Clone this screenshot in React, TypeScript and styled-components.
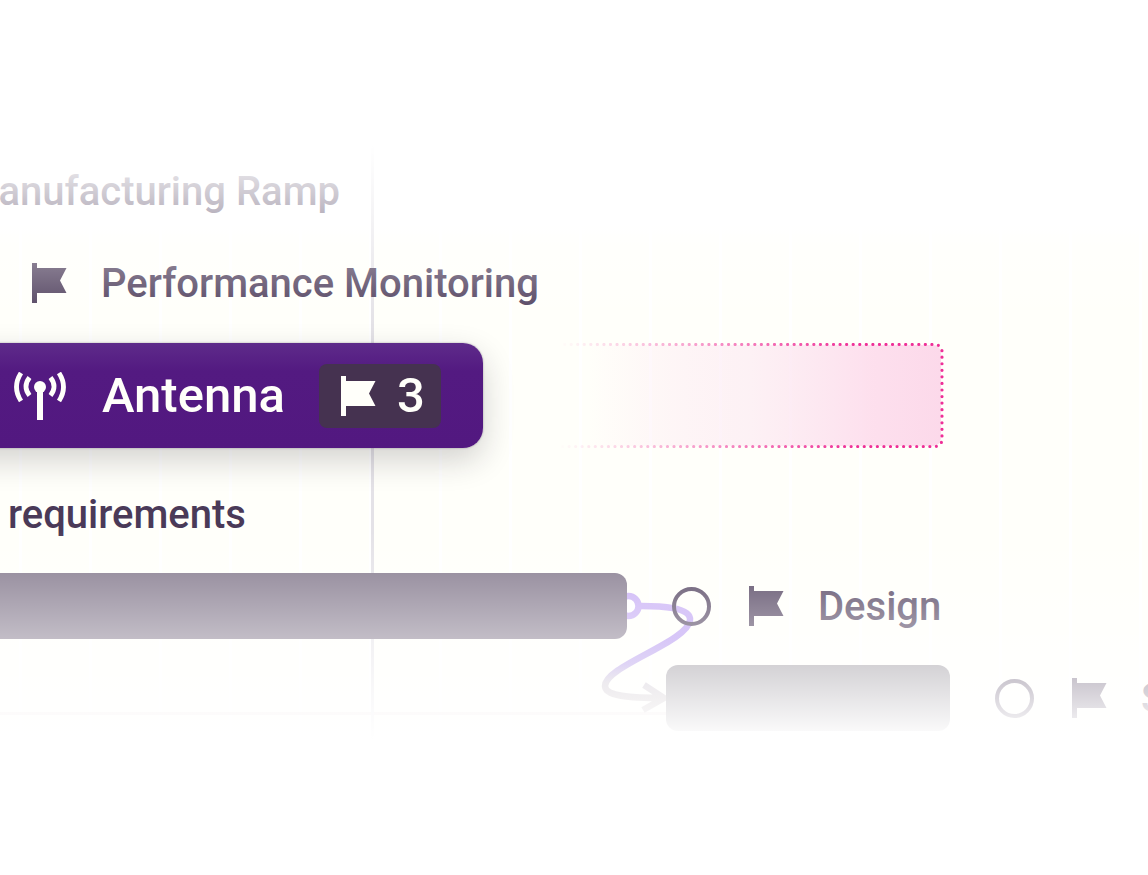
import React from "react";
import styled, { createGlobalStyle } from "styled-components";

const GlobalStyle = createGlobalStyle`
  * { box-sizing: border-box; }
  body {
    margin: 0;
    background: #fff;
    font-family: Roboto, "Liberation Sans", sans-serif;
  }
`;

const ink = "#4a3a58";

const Page = styled.main`
  min-height: 100vh;
  padding: 145px 0 131px;
  overflow: hidden;
`;

const Timeline = styled.section`
  position: relative;
  overflow: hidden;
  color: ${ink};
  background:
    linear-gradient(#e4e2e7, #e4e2e7) 371px 0 / 3px 100% no-repeat,
    linear-gradient(#ece2df, #ece2df) 0 567px / 666px 3px no-repeat,
    linear-gradient(90deg, #fff 3px, transparent 3px) 19px 0 / 70px 100%,
    linear-gradient(#fff 80px, #fffffa 100px);
`;

/* White mist that dissolves the first and last rows of the plan. */
const Mist = styled.div`
  position: absolute;
  inset: 0;
  pointer-events: none;
  background: linear-gradient(
    #fff 0,
    rgba(255, 255, 255, 0) 180px,
    rgba(255, 255, 255, 0) 385px,
    #fff 595px
  );
`;

const Row = styled.div<{ $start?: number }>`
  position: relative;
  display: flex;
  align-items: center;
  height: 92px;
  padding-left: ${({ $start = 0 }) => $start}px;
`;

const FocusRow = styled(Row)`
  align-items: flex-start;
  height: 139px;
  padding-top: 14px;
`;

const Label = styled.span`
  flex: none;
  padding-top: 2px;
  font-size: 40px;
  line-height: 48px;
  font-weight: 500;
  white-space: nowrap;
`;

const EndLabelBox = styled.div`
  display: flex;
  justify-content: flex-end;
  width: 340px;
`;

const Milestone = styled.div`
  display: flex;
  align-items: center;
  gap: 33px;
  flex: none;
`;

const Bar = styled.div<{ $width: number; $tone?: string }>`
  position: relative;
  flex: none;
  width: ${({ $width }) => $width}px;
  height: 66px;
  margin-right: 45px;
  border-radius: 12px;
  background: ${({ $tone = "#81768a" }) => $tone};
`;

const OpenBar = styled(Bar)`
  border-radius: 0 12px 12px 0;
`;

const Ring = styled.span`
  position: relative;
  flex: none;
  width: 39px;
  height: 39px;
  margin-right: 38px;
  border: 4px solid ${ink};
  border-radius: 50%;
`;

const Card = styled.article`
  position: relative;
  z-index: 2;
  display: flex;
  align-items: center;
  flex: none;
  width: 543px;
  height: 105px;
  margin-left: -60px;
  padding-left: 74px;
  border-radius: 20px;
  color: #fffffa;
  background: linear-gradient(#5e2b8a, #531a81 28px, #521880);
  box-shadow:
    0 0 2px rgba(40, 30, 50, 0.4),
    0 12px 32px rgba(30, 25, 35, 0.2);
`;

const CardTitle = styled.h2`
  margin: 0 34px 0 36px;
  font-size: 49px;
  line-height: 60px;
  font-weight: 500;
`;

const Badge = styled.span`
  display: flex;
  align-items: center;
  gap: 20px;
  width: 122px;
  height: 64px;
  padding-left: 22px;
  border-radius: 8px;
  background: #453250;
  font-size: 49px;
  line-height: 60px;
  font-weight: 500;
`;

const Ghost = styled.div`
  flex: none;
  width: 386px;
  height: 105px;
  margin-left: 75px;
`;

const Link = styled.svg`
  position: absolute;
  top: 0;
  left: 590px;
`;

function Flag() {
  return (
    <svg width="36" height="40" viewBox="0 0 36 40" fill="currentColor" aria-hidden="true">
      <path d="M0 0H5V5H34.5L28 17.5L34.5 30H5V40H0Z" />
    </svg>
  );
}

function AntennaIcon() {
  return (
    <svg width="52" height="48" viewBox="0 0 52 48" fill="none" stroke="currentColor" strokeWidth="4.8" aria-hidden="true">
      <circle cx="26" cy="15" r="6" fill="currentColor" stroke="none" />
      <path d="M26 15V48" strokeWidth="6" />
      <path d="M15.5 5.500Q8.5 14.500 15.5 23.500M36.5 5.500Q43.5 14.500 36.5 23.500" />
      <path d="M7 1Q-2 15 7 29M45 1Q54 15 45 29" />
    </svg>
  );
}

function GhostOutline() {
  return (
    <svg width="386" height="105" viewBox="0 0 386 105" fill="none" aria-hidden="true">
      <defs>
        <linearGradient id="ghostFill" gradientUnits="userSpaceOnUse" x1="30" y1="0" x2="384" y2="0">
          <stop offset="0" stopColor="#fcd5e8" stopOpacity="0" />
          <stop offset="0.45" stopColor="#fbe4f0" stopOpacity="0.5" />
          <stop offset="0.8" stopColor="#fddcec" stopOpacity="0.9" />
          <stop offset="1" stopColor="#fcd9ea" />
        </linearGradient>
        <linearGradient id="ghostDots" gradientUnits="userSpaceOnUse" x1="0" y1="0" x2="300" y2="0">
          <stop offset="0" stopColor="#ee2f97" stopOpacity="0" />
          <stop offset="1" stopColor="#ee2f97" />
        </linearGradient>
      </defs>
      <path d="M0 2H375a8 8 0 0 1 8 8V95a8 8 0 0 1-8 8H0Z" fill="url(#ghostFill)" />
      <path
        d="M0 1.5H377a7 7 0 0 1 7 7V96.500a7 7 0 0 1-7 7H0"
        stroke="url(#ghostDots)"
        strokeWidth="3.2"
        strokeLinecap="round"
        strokeDasharray="0 6.56"
      />
    </svg>
  );
}

function Dependency() {
  return (
    <Link width="90" height="170" viewBox="590 560 90 170" overflow="visible" fill="none" strokeWidth="6.500" aria-hidden="true">
      <defs>
        <linearGradient id="linkStroke" gradientUnits="userSpaceOnUse" x1="0" y1="606" x2="0" y2="700">
          <stop offset="0" stopColor="#c4a9f4" />
          <stop offset="0.35" stopColor="#ad8af0" />
          <stop offset="0.62" stopColor="#a78ae6" />
          <stop offset="0.82" stopColor="#bfb6c4" />
          <stop offset="1" stopColor="#c0b6bb" />
        </linearGradient>
      </defs>
      <circle cx="628.5" cy="606" r="10" stroke="#c4a9f4" fill="#fff" />
      <path
        d="M641 606C660 606 691 607 690 620C688 642 605 666 605 686C605 696 628 698 664 698M644 685L664 698L643 710"
        stroke="url(#linkStroke)"
      />
    </Link>
  );
}

export default function App() {
  return (
    <>
      <GlobalStyle />
      <Page>
        <Timeline aria-label="Project timeline">
          <Row>
            <EndLabelBox>
              <Label>Manufacturing Ramp</Label>
            </EndLabelBox>
          </Row>
          <Row $start={32}>
            <Milestone>
              <Flag />
              <Label>Performance Monitoring</Label>
            </Milestone>
          </Row>
          <FocusRow>
            <Card>
              <AntennaIcon />
              <CardTitle>Antenna</CardTitle>
              <Badge>
                <Flag />
                3
              </Badge>
            </Card>
            <Ghost>
              <GhostOutline />
            </Ghost>
          </FocusRow>
          <Row $start={8}>
            <Label>requirements</Label>
          </Row>
          <Row>
            <Dependency />
            <OpenBar $width={627} />
            <Ring />
            <Milestone>
              <Flag />
              <Label>Design</Label>
            </Milestone>
          </Row>
          <Row $start={666}>
            <Bar $width={284} $tone="#86818a" />
            <Ring />
            <Milestone>
              <Flag />
              <Label>S</Label>
            </Milestone>
          </Row>
          <Mist />
        </Timeline>
      </Page>
    </>
  );
}
